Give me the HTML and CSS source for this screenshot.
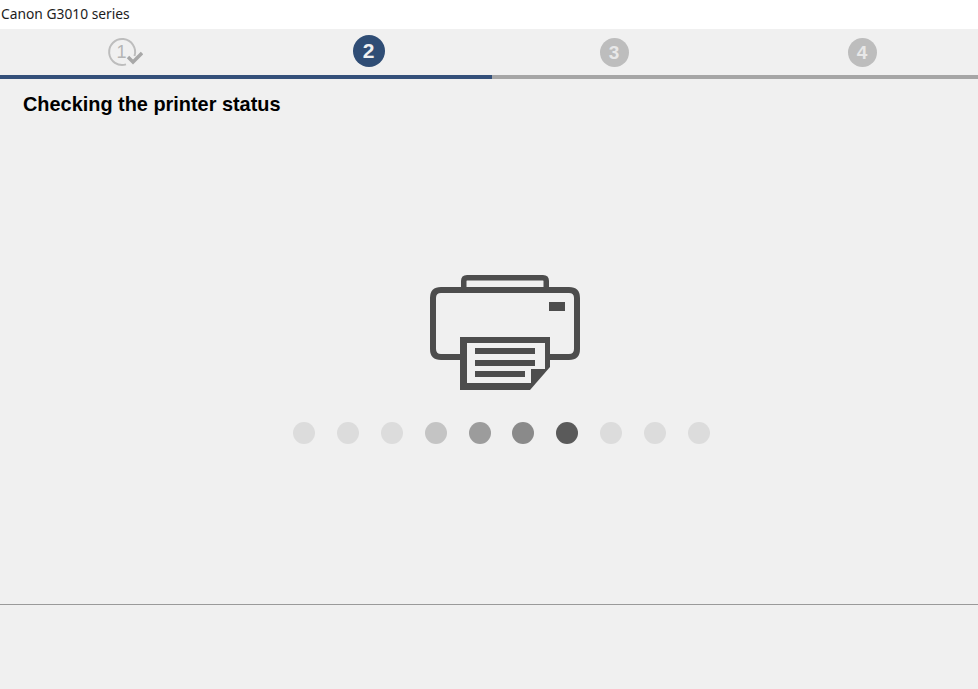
FILE: index.html
```html
<!DOCTYPE html>
<html lang="en">
<head>
    <meta charset="UTF-8">
    <meta name="viewport" content="width=device-width, initial-scale=1.0">
    <title>Canon G3010 series</title>
    <link rel="stylesheet" href="styles.css">
</head>
<body>
    <div class="title-bar">Canon G3010 series</div>

    <div class="steps">
        <div class="step">
            <svg class="step-done" viewBox="0 0 40 32" width="40" height="32">
                <path d="M23 28.400 A13 13 0 1 1 31.500 20" fill="none" stroke="#bdbdbd" stroke-width="2"/>
                <text x="18.500" y="22" class="step-done-num">1</text>
                <path d="M25 21 L30 26 L39 17" fill="none" stroke="#a8a8a8" stroke-width="3.400"/>
            </svg>
        </div>
        <div class="step"><span class="step-num current">2</span></div>
        <div class="step"><span class="step-num">3</span></div>
        <div class="step"><span class="step-num">4</span></div>
    </div>
    <div class="progress"><div class="progress-fill"></div></div>

    <div class="main">
        <h1 class="main-title">Checking the printer status</h1>
        <div class="status">
            <svg class="printer" viewBox="0 0 152 117" width="152" height="117">
                <!-- top tray -->
                <path d="M34.750 14 V7 Q34.750 3.750 38 3.750 H114 Q117.250 3.750 117.250 7 V14" fill="none" stroke="#4d4d4d" stroke-width="5.500"/>
                <!-- body -->
                <path d="M32 83 H12 Q4 83 4 75 V24 Q4 16 12 16 H140 Q148 16 148 24 V75 Q148 83 140 83 H120" fill="none" stroke="#4d4d4d" stroke-width="6"/>
                <rect x="120" y="28" width="16" height="9" fill="#4d4d4d"/>
                <!-- paper -->
                <path d="M31 63 V116 H101 L121 93 V63 Z" fill="#4d4d4d"/>
                <path d="M38 69 H116 V95 H102 V109 H38 Z" fill="#f0f0f0"/>
                <rect x="46" y="74" width="60" height="6" fill="#4d4d4d"/>
                <rect x="46" y="86" width="60" height="6" fill="#4d4d4d"/>
                <rect x="46" y="97" width="50" height="6" fill="#4d4d4d"/>
            </svg>
            <div class="dots">
                <span class="dot"></span>
                <span class="dot"></span>
                <span class="dot"></span>
                <span class="dot dot-4"></span>
                <span class="dot dot-5"></span>
                <span class="dot dot-6"></span>
                <span class="dot dot-7"></span>
                <span class="dot"></span>
                <span class="dot"></span>
                <span class="dot"></span>
            </div>
        </div>
    </div>

    <div class="footer"></div>
</body>
</html>
```

FILE: styles.css
```css
html, body {
    height: 100%;
}

body {
    margin: 0;
    display: flex;
    flex-direction: column;
    overflow: hidden;
    background-color: #f0f0f0;
    font-family: "Liberation Sans", Arial, sans-serif;
}

.title-bar {
    height: 29px;
    padding-left: 1px;
    background-color: #fff;
    color: #1c1c1c;
    font-family: "Noto Sans", sans-serif;
    font-size: 13.800px;
    line-height: 28px;
}

.steps {
    display: grid;
    grid-template-columns: 246px 245px 246px 250px;
    height: 46px;
}

.step {
    display: flex;
    justify-content: center;
    align-items: center;
}

.step-done-num {
    fill: #b5b5b5;
    font-size: 18px;
    text-anchor: middle;
}

.step-num {
    width: 29px;
    height: 29px;
    margin-top: 1px;
    border-radius: 50%;
    background-color: #bdbdbd;
    color: #e8e8e8;
    font-size: 19px;
    font-weight: bold;
    line-height: 29px;
    text-align: center;
}

.step-num.current {
    width: 32px;
    height: 32px;
    margin-top: -2px;
    background-color: #2f4d75;
    color: #f0f0f0;
    font-size: 21px;
    line-height: 32px;
}

.progress {
    height: 4px;
    background-color: #a6a6a6;
}

.progress-fill {
    width: 492px;
    height: 100%;
    background-color: #34507a;
}

.main {
    height: 525px;
    border-bottom: 1px solid #9a9a9a;
}

.main-title {
    margin: 0;
    padding: 13px 0 0 23px;
    color: #000;
    font-size: 19.900px;
    font-weight: bold;
    line-height: 24px;
}

.status {
    display: flex;
    flex-direction: column;
    align-items: center;
    gap: 31px;
    margin-top: 158px;
    padding-left: 32px;
}

.dots {
    display: flex;
    gap: 21.900px;
    margin-left: -7px;
}

.dot {
    width: 22px;
    height: 22px;
    border-radius: 50%;
    background-color: #dcdcdc;
}

.dot-4 { background-color: #c4c4c4; }
.dot-5 { background-color: #9c9c9c; }
.dot-6 { background-color: #8a8a8a; }
.dot-7 { background-color: #5a5a5a; }

.footer {
    flex: 1;
}
```
